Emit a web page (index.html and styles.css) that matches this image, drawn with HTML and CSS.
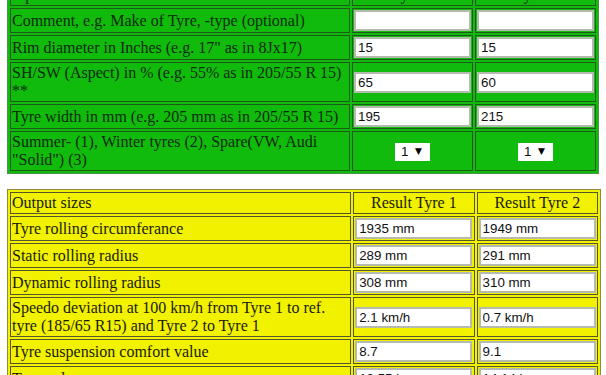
FILE: index.html
```html
<!DOCTYPE html>
<html>
<head>
<meta charset="utf-8">
<title>Tyre calculator</title>
<link rel="stylesheet" href="styles.css">
</head>
<body>
<div class="page">
<table class="tbl green">
  <colgroup><col class="c-label"><col class="c-val"><col class="c-val"></colgroup>
  <tr><td>Input sizes</td><td class="center">Tyre 1</td><td class="center">Tyre 2</td></tr>
  <tr><td>Comment, e.g. Make of Tyre, -type (optional)</td><td><input class="field" type="text" value=""></td><td><input class="field" type="text" value=""></td></tr>
  <tr><td>Rim diameter in Inches (e.g. 17" as in 8Jx17)</td><td><input class="field" type="text" value="15"></td><td><input class="field" type="text" value="15"></td></tr>
  <tr><td>SH/SW (Aspect) in % (e.g. 55% as in 205/55 R 15) **</td><td><input class="field" type="text" value="65"></td><td><input class="field" type="text" value="60"></td></tr>
  <tr><td>Tyre width in mm (e.g. 205 mm as in 205/55 R 15)</td><td><input class="field" type="text" value="195"></td><td><input class="field" type="text" value="215"></td></tr>
  <tr><td>Summer- (1), Winter tyres (2), Spare(VW, Audi "Solid") (3)</td>
    <td class="center"><span class="sel"><select><option>1</option><option>2</option><option>3</option></select></span></td>
    <td class="center"><span class="sel"><select><option>1</option><option>2</option><option>3</option></select></span></td></tr>
</table>

<table class="tbl yellow">
  <colgroup><col class="c-label"><col class="c-val"><col class="c-val"></colgroup>
  <tr><td>Output sizes</td><td class="center">Result Tyre 1</td><td class="center">Result Tyre 2</td></tr>
  <tr><td>Tyre rolling circumferance</td><td><input class="field" type="text" value="1935 mm" readonly></td><td><input class="field" type="text" value="1949 mm" readonly></td></tr>
  <tr><td>Static rolling radius</td><td><input class="field" type="text" value="289 mm" readonly></td><td><input class="field" type="text" value="291 mm" readonly></td></tr>
  <tr><td>Dynamic rolling radius</td><td><input class="field" type="text" value="308 mm" readonly></td><td><input class="field" type="text" value="310 mm" readonly></td></tr>
  <tr><td>Speedo deviation at 100 km/h from Tyre 1 to ref. tyre (185/65 R15) and Tyre 2 to Tyre 1</td><td><input class="field" type="text" value="2.1 km/h" readonly></td><td><input class="field" type="text" value="0.7 km/h" readonly></td></tr>
  <tr><td>Tyre suspension comfort value</td><td><input class="field" type="text" value="8.7" readonly></td><td><input class="field" type="text" value="9.1" readonly></td></tr>
  <tr><td>Tyre volume</td><td><input class="field" type="text" value="12.55 l" readonly></td><td><input class="field" type="text" value="14.14 l" readonly></td></tr>
</table>
</div>
</body>
</html>
```
FILE: styles.css
```css
html, body {
  background: #ffffff;
}
body {
  margin: 0 0 0 7px;
  font-family: "Liberation Serif", "Times New Roman", serif;
  font-size: 16px;
  line-height: 18px;
  color: #111;
}
.page {
  margin-top: -19px;
}
.tbl {
  table-layout: fixed;
  border-collapse: separate;
  border-spacing: 2px;
  width: 592px;
}
.c-label { width: 340px; }
.c-val { width: 121px; }
.tbl td {
  padding: 1px;
  vertical-align: middle;
  text-align: left;
}
.tbl td.center {
  text-align: center;
}
.green {
  background: #11bb0c;
  border: 1px solid #4d8f4d;
  color: #0d2a0b;
}
.green td {
  border: 1px solid #1d5a1b;
}
.yellow {
  margin-top: 15px;
  width: 594px;
  background: #f2f200;
  border: 1px solid #8c8c45;
  color: #1a1a08;
}
.yellow td {
  border: 1px solid #55552a;
}
.field {
  display: block;
  box-sizing: border-box;
  width: 117px;
  height: 21px;
  margin: 0;
  padding: 1px 2px;
  border: 2px solid rgba(120, 130, 110, 0.55);
  background: #ffffff;
  font-family: "Liberation Sans", Arial, sans-serif;
  font-size: 13.33px;
  color: #111;
  outline: none;
}
.sel {
  position: relative;
  display: inline-block;
  vertical-align: middle;
}
.sel select {
  -webkit-appearance: none;
  appearance: none;
  box-sizing: border-box;
  width: 35px;
  height: 18px;
  margin: 0;
  padding: 0 0 0 6px;
  border: 0;
  background: #ffffff;
  font-family: "Liberation Sans", Arial, sans-serif;
  font-size: 13.33px;
  color: #111;
  text-align: left;
}
.sel::after {
  content: "\25BC";
  position: absolute;
  right: 8px;
  top: 4px;
  font-family: "DejaVu Sans", sans-serif;
  font-size: 9px;
  line-height: 10px;
  color: #000;
  pointer-events: none;
}
```
